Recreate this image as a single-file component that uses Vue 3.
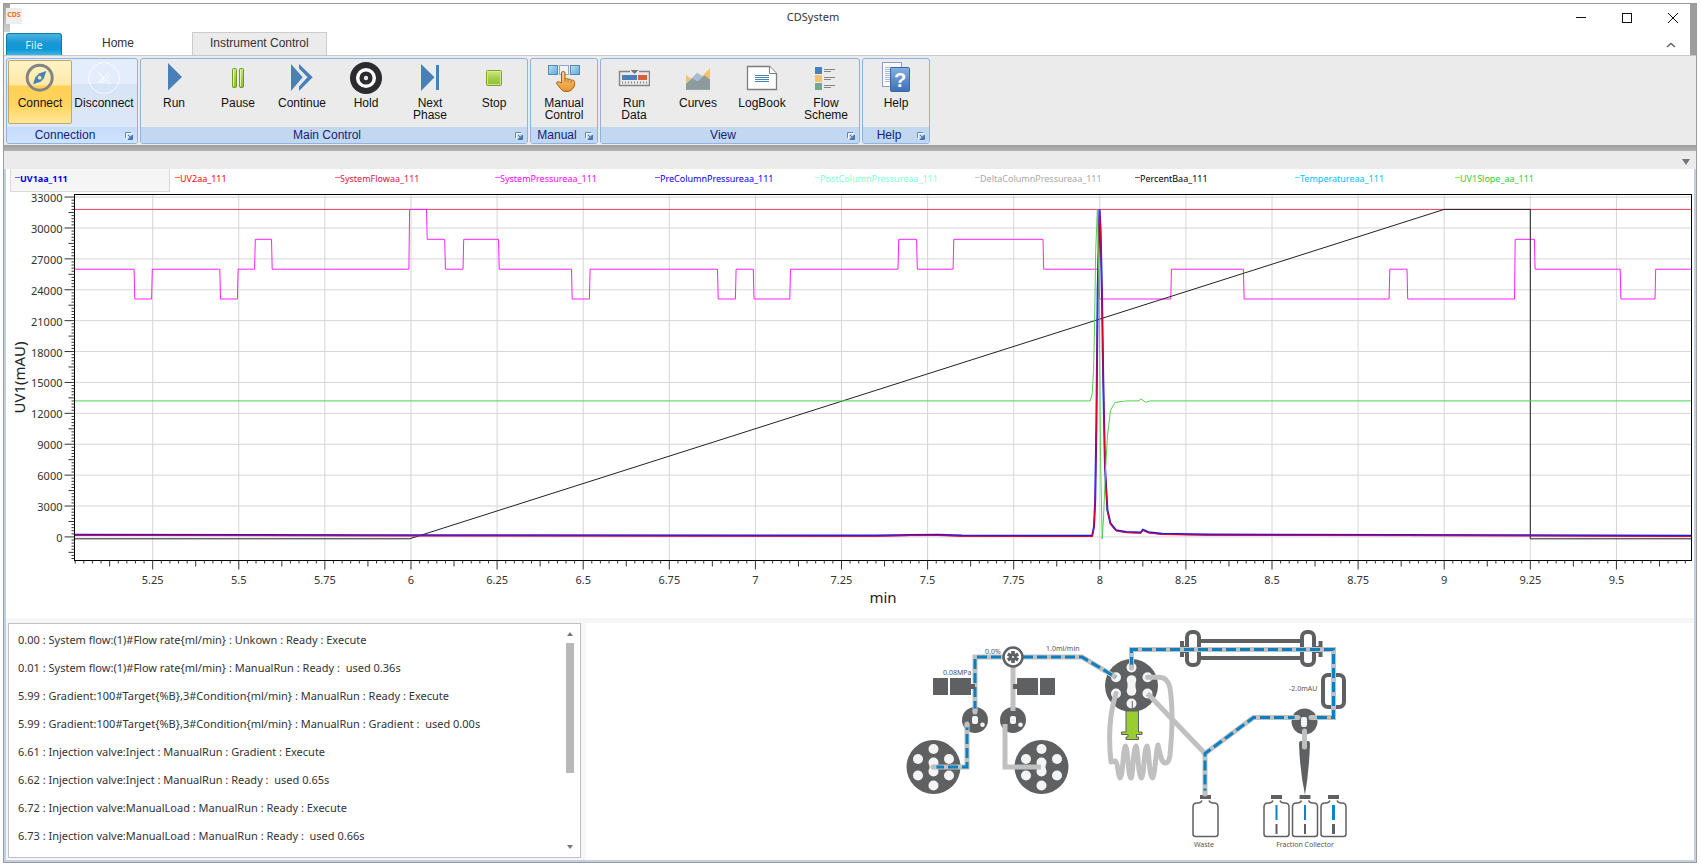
<template>
  <div class="window">
    <header class="header">
      <div class="title-bar">
        <span class="app-icon">CDS</span>
        <h1 class="title">CDSystem</h1>
        <button class="window-button" aria-label="Minimize">
          <svg width="10" height="10"><path d="M0 4.5H10" /></svg>
        </button>
        <button class="window-button" aria-label="Maximize">
          <svg width="10" height="10"><rect x="0.5" y="0.5" width="9" height="9" /></svg>
        </button>
        <button class="window-button" aria-label="Close">
          <svg width="10" height="10"><path d="M0 0L10 10M10 0L0 10" /></svg>
        </button>
      </div>
      <nav class="tabs">
        <button class="tab-file">File</button>
        <button class="tab tab-home">Home</button>
        <button class="tab tab-active">Instrument Control</button>
        <button class="collapse" aria-label="Collapse ribbon">
          <svg width="10" height="6"><path d="M1 5L5 1.5L9 5" /></svg>
        </button>
      </nav>
    </header>

    <div class="ribbon">
      <section
        v-for="group in groups"
        :key="group.name"
        class="group"
        :class="{ hovered: group.name == 'Connection' }"
      >
        <div class="group-buttons">
          <button
            v-for="item in group.items"
            :key="item.label"
            class="tool"
            :class="{ active: item.label == activeTool }"
            @click="activeTool = item.label"
          >
            <svg width="32" height="32" viewBox="0 0 32 32" v-html="icons[item.icon]"></svg>
            <span class="tool-label">{{ item.label }}</span>
          </button>
        </div>
        <div class="group-footer">
          <span class="group-name">{{ group.name }}</span>
          <button class="launcher" :aria-label="group.name + ' options'">
            <svg width="8" height="8" viewBox="0 0 8 8">
              <path d="M0.5 6V0.5H6" fill="none" stroke="#5f86bd" />
              <path d="M1.5 7V1.5H7" fill="none" stroke="#fff" />
              <path d="M3 3L5 5M7.5 3V7.5H3Z" fill="#4a74ad" stroke="#4a74ad" />
            </svg>
          </button>
        </div>
      </section>
    </div>
    <div class="ribbon-shadow"></div>
    <div class="strip">
      <button class="strip-menu" aria-label="Curve list">
        <svg width="8" height="6"><path d="M0 0H8L4 6Z" fill="#757575" /></svg>
      </button>
    </div>

    <main class="body">
      <div class="legend">
        <button
          v-for="curve in curves"
          :key="curve.name"
          class="legend-item"
          :class="{ selected: curve.name == selectedCurve }"
          :style="{ color: curve.color }"
          @click="selectedCurve = curve.name"
        >
          <i class="dash"></i>{{ curve.name }}
        </button>
      </div>

      <div ref="chartBox" class="chart">
        <svg :width="size.width" :height="size.height">
          <g class="grid">
            <line v-for="t in xMajor" :key="'gx' + t" :x1="px(t)" :x2="px(t)" :y1="plot.top" :y2="plot.bottom" />
            <line v-for="t in yMajor" :key="'gy' + t" :x1="plot.left" :x2="plot.right" :y1="py(t)" :y2="py(t)" />
          </g>
          <g class="series">
            <path v-for="s in series" :key="s.name" :d="toPath(s.points)" :stroke="s.color" :stroke-width="s.width" />
          </g>
          <rect
            class="frame"
            :x="plot.left"
            :y="plot.top"
            :width="plot.right - plot.left"
            :height="plot.bottom - plot.top"
          />
          <g class="ticks">
            <line
              v-for="t in xTicks"
              :key="'tx' + t.value"
              :x1="px(t.value)"
              :x2="px(t.value)"
              :y1="plot.bottom"
              :y2="plot.bottom + t.length"
            />
            <line
              v-for="t in yTicks"
              :key="'ty' + t.value"
              :x1="plot.left - t.length"
              :x2="plot.left"
              :y1="py(t.value)"
              :y2="py(t.value)"
            />
          </g>
          <g class="tick-labels">
            <text v-for="t in xMajor" :key="'lx' + t" :x="px(t)" :y="plot.bottom + 23" text-anchor="middle">{{ t }}</text>
            <text v-for="t in yMajor" :key="'ly' + t" :x="plot.left - 12" :y="py(t) + 5" text-anchor="end">{{ t }}</text>
          </g>
          <text class="axis-title" :x="(plot.left + plot.right) / 2" :y="size.height - 15" text-anchor="middle">min</text>
          <text
            class="axis-title"
            text-anchor="middle"
            :transform="`translate(19 ${(plot.top + plot.bottom) / 2}) rotate(-90)`"
          >UV1(mAU)</text>
        </svg>
      </div>

      <div class="bottom">
        <div class="log">
          <ul class="log-list">
            <li v-for="line in logLines" :key="line">{{ line }}</li>
          </ul>
          <div class="scrollbar">
            <svg width="6" height="4"><path d="M0 4L3 0L6 4Z" fill="#777" /></svg>
            <div class="track"><div class="thumb"></div></div>
            <svg width="6" height="4"><path d="M0 0L3 4L6 0Z" fill="#777" /></svg>
          </div>
        </div>

        <div class="scheme">
          <svg class="flow" width="480" height="237" viewBox="900 623 480 237">
            <!-- pumps -->
            <g v-for="pump in pumps" :key="pump.x" :transform="`translate(${pump.x} 767)`">
              <circle r="27" class="dark" />
              <circle v-for="h in pumpHoles" :key="h.join()" :cx="h[0]" :cy="h[1]" r="5" class="hole" />
              <circle cy="-4.5" r="5" class="hole" />
              <circle cy="4.5" r="5" class="hole" />
              <rect x="-4" y="-5" width="8" height="10" class="hole" />
            </g>
            <g v-for="x in [975, 1013]" :key="x" :transform="`translate(${x} 720)`">
              <circle r="13" class="dark" />
              <rect x="-3" y="-4" width="6" height="8" rx="2" class="hole" />
              <circle cx="7.5" cy="4.7" r="2.3" class="hole" />
            </g>
            <path class="dark" d="M933 678h15v17h-15zM950 678h21v17h-21zM1017 678h21v17h-21zM1040 678h15v17h-15z" />

            <!-- injection valve -->
            <circle cx="1131.5" cy="685.5" r="26.5" class="dark" />
            <circle v-for="h in valveHoles" :key="h.join()" :cx="h[0]" :cy="h[1]" r="5" class="hole" />
            <circle cx="1131.5" cy="680" r="4.8" class="hole" />
            <circle cx="1131.5" cy="691" r="4.8" class="hole" />
            <rect x="1127.5" y="680" width="8" height="11" class="hole" />

            <!-- column -->
            <path
              class="dark"
              d="M1180 641h4v5h3v7h-3v4h-4zM1322.5 641h-4v5h-3v7h3v4h4zM1200 639h101v4h-101zM1200 656h101v4h-101z"
            />
            <rect x="1187" y="632" width="12" height="33" rx="5" class="ring" />
            <rect x="1302" y="632" width="12" height="33" rx="5" class="ring" />

            <!-- detector and outlet valve -->
            <rect x="1323" y="675" width="21" height="32" rx="5" class="ring" />
            <circle cx="1304.5" cy="721.5" r="13" class="dark" />
            <rect x="1301" y="717" width="6" height="10" rx="2" class="hole" />
            <path class="dark" d="M1299 744q0-3 2-3h7q2 0 2 3q-1 28-5 51q-5-23-6-51z" />

            <!-- idle tubing -->
            <path class="pipe" d="M1013 667V711M1005 724V767H1041" />
            <path class="pipe" d="M1147.5 693.5L1205 753.5" />
            <path class="pipe" d="M1304.5 731V747" stroke-linecap="round" />
            <path
              class="coil"
              d="M1147.5 677.3H1160Q1168 678 1170 688Q1174 715 1170 755Q1169 763 1165 763C1161 762 1161 757 1158 745
                C1156 748 1155 777 1152.5 778C1149 777 1149 747 1147 746C1144 747 1144 777 1141.5 778C1138 777 1138 747 1136.3 746
                C1133 747 1133 777 1131 778C1128 777 1128 747 1125.5 746C1123 747 1123 777 1120 778C1118 777 1118 762 1115.5 761
                L1111 762C1108 735 1110 712 1116 693.5"
            />

            <!-- active tubing, blue medium over the tube wall -->
            <path v-for="d in activePipes" :key="'p' + d" class="pipe" :d="d" />
            <path v-for="d in activePipes" :key="'m' + d" class="medium" :d="d" />
            <path class="dark" d="M971 684h4v5h-4zM1013 684h4v5h-4z" />
            <path
              class="pipe"
              stroke-linecap="round"
              d="M975 711V712M933 767H934M967 724V725M1131.5 667V668M1297 717.5H1298M1311 717.5H1312"
            />

            <!-- mixer -->
            <circle cx="1013" cy="657" r="9.5" fill="#fff" stroke="#5f6062" stroke-width="2.5" />
            <path
              d="M1013 651V663M1007.8 654L1018.2 660M1007.8 660L1018.2 654"
              stroke="#5f6062"
              stroke-width="3.6"
            />
            <circle cx="1013" cy="657" r="1" fill="#fff" />

            <!-- syringe -->
            <path
              d="M1132.3 701V711H1126V732H1121.5V734.5H1128V737H1126V739.5H1138.5V737H1136.5V734.5H1142V732H1138.5V711H1132.3"
              fill="#9acd32"
              stroke="#5f6062"
            />

            <!-- bottles -->
            <g v-for="b in bottles" :key="b.x" :transform="`translate(${b.x} 795)`">
              <rect x="-5" width="11" height="4" class="dark" />
              <path
                d="M-3 5.5Q-4 8 -7 8H-8Q-12 8 -12 12V39Q-12 41.5 -9.5 41.5H10.5Q13 41.5 13 39V12Q13 8 9 8H8Q5 8 4 5.5"
                class="glass"
              />
              <template v-if="b.marked">
                <rect :x="-b.marked / 2 + 0.5" y="10" :width="b.marked" height="15" fill="#0a85c7" />
                <rect :x="-b.marked / 2 + 0.5" y="29" :width="b.marked" height="10" class="dark" />
              </template>
            </g>
            <path class="pipe" stroke-linecap="round" d="M1205 793V794" />

            <text x="985" y="654">0.0%</text>
            <text x="943" y="675">0.08MPa</text>
            <text x="1046" y="651">1.0ml/min</text>
            <text x="1289" y="691">-2.0mAU</text>
            <text x="1204" y="847" text-anchor="middle">Waste</text>
            <text x="1305" y="847" text-anchor="middle">Fraction Collector</text>
          </svg>
        </div>
      </div>
    </main>
  </div>
</template>

<script setup>
import { computed, onBeforeUnmount, onMounted, reactive, ref } from 'vue';

const activeTool = ref('Connect');
const selectedCurve = ref('UV1aa_111');

const groups = [
  {
    name: 'Connection',
    items: [
      { label: 'Connect', icon: 'connect' },
      { label: 'Disconnect', icon: 'disconnect' }
    ]
  },
  {
    name: 'Main Control',
    items: [
      { label: 'Run', icon: 'run' },
      { label: 'Pause', icon: 'pause' },
      { label: 'Continue', icon: 'resume' },
      { label: 'Hold', icon: 'hold' },
      { label: 'Next Phase', icon: 'next' },
      { label: 'Stop', icon: 'stop' }
    ]
  },
  { name: 'Manual', items: [{ label: 'Manual Control', icon: 'manual' }] },
  {
    name: 'View',
    items: [
      { label: 'Run Data', icon: 'runData' },
      { label: 'Curves', icon: 'curves' },
      { label: 'LogBook', icon: 'logBook' },
      { label: 'Flow Scheme', icon: 'flow' }
    ]
  },
  { name: 'Help', items: [{ label: 'Help', icon: 'help' }] }
];

const green = (id) =>
  `<linearGradient id="${id}" x1="0" y1="0" x2="0" y2="1"><stop offset="0" stop-color="#cde78c"/><stop offset=".5" stop-color="#a5cf4c"/><stop offset="1" stop-color="#8fbf30"/></linearGradient>`;
const blue = (id) =>
  `<linearGradient id="${id}" x1="0" y1="0" x2="1" y2="1"><stop offset="0" stop-color="#b9e2f7"/><stop offset="1" stop-color="#5aa9dc"/></linearGradient>`;

const icons = {
  connect:
    '<circle cx="15.7" cy="15.7" r="12.5" fill="none" stroke="#848484" stroke-width="3"/><path d="M9 22.3L11.8 14L17.5 19.5Z M22.3 9L19.6 17.3L14 11.8Z" fill="#4a80ba"/><circle cx="15.7" cy="15.7" r="2.6" fill="#ffe6a0" stroke="#4a80ba" stroke-width="1.5"/>',
  disconnect:
    '<circle cx="16" cy="16" r="15.400" fill="none" stroke="#fff" opacity=".8"/><path d="M9.500 9.500L13.500 13.500M12 20.500L16 16.500L12 12.500M20.500 11L11 20M22 13L14 21M18.500 18L22.500 22" fill="none" stroke="#fff" opacity=".85"/>',
  run: '<path d="M10 1L24 15L10 28.5Z" fill="#4a80ba"/>',
  pause:
    green('gp') +
    '<g fill="url(#gp)" stroke="#6f9a1f"><rect x="10.5" y="6.5" width="4" height="19" rx="1"/><rect x="17.5" y="6.5" width="4" height="19" rx="1"/></g><path d="M11.5 8V24M18.5 8V24" stroke="#e3f3b5"/>',
  resume: '<path d="M5 2L16.7 15.3L5 29Z M13 2L26.7 15.3L13 29V24.5L21.5 15.3L13 6.5Z" fill="#4a80ba"/>',
  hold:
    '<circle cx="16" cy="16" r="16" fill="#2b2b30"/><circle cx="16" cy="16" r="8.3" fill="none" stroke="#fff" stroke-width="3.5"/><circle cx="16" cy="16" r="2.2" fill="#eaeaea"/>',
  next: '<path d="M7 2L20.5 15.3L7 29Z M22 3H25V28H22Z" fill="#4a80ba"/>',
  stop:
    green('gs') +
    '<rect x="8.5" y="8.5" width="15" height="15" rx="1" fill="url(#gs)" stroke="#7ba428"/><rect x="9.5" y="9.5" width="13" height="13" fill="none" stroke="#d8eca0" opacity=".8"/>',
  manual:
    blue('bm') +
    '<linearGradient id="hm" x1="0" y1="0" x2="0" y2="1"><stop offset="0" stop-color="#ffd28a"/><stop offset="1" stop-color="#e8932c"/></linearGradient>' +
    '<g fill="url(#bm)" stroke="#5b87b5"><rect x=".5" y="3.5" width="9" height="9"/><rect x="22.5" y="3.5" width="9" height="9"/></g><rect x="11.5" y="3.5" width="9" height="9" fill="#eef2fb" stroke="#93a6cb"/>' +
    '<path d="M13.5 21V11Q13.5 9.5 15.2 9.5Q17 9.5 17 11V17Q18.5 15.5 20 17.3Q22 16.3 23 18.3Q26.5 17.3 26.7 20.5Q27 25 24 27.5Q21 30 18 29.500Q14 29.500 12.500 26.500L8.5 21.5Q8.5 19.5 10.5 19.7Z" fill="url(#hm)" stroke="#a35f14"/><path d="M17 17V20M20 17.5V20.5M23 18.5V21" stroke="#a35f14" stroke-width=".8"/>',
  runData:
    '<path d="M12 9.5H1.5V23.5H31.5V9.5H21" fill="none" stroke="#858585" stroke-width="1.4"/><path d="M12.5 8H20.5L16.5 12Z" fill="#777"/><rect x="4" y="13" width="15" height="5" fill="#4a80ba"/><rect x="20" y="13" width="9" height="5" fill="#d95f3b"/><path d="M4 20.5H30" stroke="#858585" stroke-width="2" stroke-dasharray="1 2"/>',
  curves:
    '<path d="M4 13L10.7 18L19 15L28 6.3V27.7H4Z" fill="#efc36f"/><path d="M4 22L15 10.7L20 14L28 22V27.7H4Z" fill="#a8bcd4"/><path d="M4 22L10.5 16.5L15.5 19.5L22.5 13.5L28 17.5V27.7H4Z" fill="#8c9b9b"/>',
  logBook:
    '<path d="M1.5 4.5H23.5L30.5 11.5V27.5H1.5Z" fill="#fff" stroke="#7d7d7d" stroke-width="1.3"/><path d="M23.5 4.5V11.5H30.5" fill="#fff" stroke="#7d7d7d"/><path d="M9 13.5H23M9 15.5H23M9 17.5H23M9 19.5H23" stroke="#4a80ba"/>',
  flow:
    '<path d="M5 5H12V12H5Z" fill="#4a80ba"/><path d="M5 13H12V20H5Z" fill="#efc36f"/><path d="M5 21H12V28H5Z" fill="#73a792"/><path d="M14 7.5H25M14 9.5H21M14 15.5H25M14 17.5H21M14 23.5H25M14 25.5H21" stroke="#858585"/>',
  help:
    '<linearGradient id="gh" x1="0" y1="0" x2="0" y2="1"><stop offset="0" stop-color="#82b0e0"/><stop offset="1" stop-color="#3c6fb5"/></linearGradient><rect x="2.5" y=".5" width="19" height="24" fill="#f7f9fd" stroke="#8aa0cb"/><path d="M5 5.5H18M5 7.5H18M5 9.5H10M5 11.5H10M5 13.5H10M5 15.5H10M5 17.5H10M5 19.5H10" stroke="#a9b9d9"/><rect x="10.5" y="5.5" width="19" height="24" rx="1" fill="url(#gh)" stroke="#3a66a8"/><text x="20" y="25" text-anchor="middle" font-family="Liberation Sans, sans-serif" font-weight="bold" font-size="20" fill="#fff">?</text>'
};

const curves = [
  { name: 'UV1aa_111', color: '#0000e6' },
  { name: 'UV2aa_111', color: '#f00' },
  { name: 'SystemFlowaa_111', color: '#dc143c' },
  { name: 'SystemPressureaa_111', color: '#f0f' },
  { name: 'PreColumnPressureaa_111', color: '#00f' },
  { name: 'PostColumnPressureaa_111', color: '#7fffd4' },
  { name: 'DeltaColumnPressureaa_111', color: '#a9a9a9' },
  { name: 'PercentBaa_111', color: '#000' },
  { name: 'Temperatureaa_111', color: '#00bfff' },
  { name: 'UV1Slope_aa_111', color: '#32cd32' }
];

// chart geometry follows the size of its box
const chartBox = ref(null);
const size = reactive({ width: 1688, height: 424 });
const domain = { x0: 5.023, x1: 9.718, y0: -2290, y1: 33250 };

let observer;
onMounted(() => {
  observer = new ResizeObserver(([entry]) => {
    size.width = Math.round(entry.contentRect.width);
    size.height = Math.round(entry.contentRect.height);
  });
  observer.observe(chartBox.value);
});
onBeforeUnmount(() => observer.disconnect());

const plot = computed(() => ({
  left: 68.5,
  top: 0.5,
  right: size.width - 2.5,
  bottom: size.height - 57.5
}));

const px = (v) => {
  const { left, right } = plot.value;
  return left + ((v - domain.x0) / (domain.x1 - domain.x0)) * (right - left);
};
const py = (v) => {
  const { top, bottom } = plot.value;
  return bottom - ((v - domain.y0) / (domain.y1 - domain.y0)) * (bottom - top);
};
const toPath = (points) => 'M' + points.map(([x, y]) => `${px(x).toFixed(1)} ${py(y).toFixed(1)}`).join('L');

const xMajor = Array.from({ length: 18 }, (_, i) => 5.25 + i * 0.25);
const yMajor = Array.from({ length: 12 }, (_, i) => i * 3000);

const tickLength = (i, major) => (i % 10 == 0 ? major : i % 5 == 0 ? 6 : 3);
const xTicks = [];
for (let i = 201; i <= 388; i++) {
  xTicks.push({ value: i * 0.025, length: tickLength(i, 9) });
}
const yTicks = [];
for (let i = -7; i <= 110; i++) {
  yTicks.push({ value: i * 300, length: tickLength(i, 10) });
}

// [start, level] of every step of the system pressure
const pressureSteps = [
  [5.023, 26000], [5.196, 23100], [5.247, 26000], [5.445, 23100], [5.496, 26000], [5.546, 28900],
  [5.595, 26000], [5.994, 31800], [6.045, 28900], [6.098, 26000], [6.151, 28900], [6.254, 26000],
  [6.466, 23100], [6.518, 26000], [6.89, 23100], [6.942, 26000], [6.994, 23100], [7.1, 26000],
  [7.414, 28900], [7.468, 26000], [7.574, 28900], [7.835, 26000], [7.997, 23100], [8.206, 26000],
  [8.417, 23100], [8.84, 26000], [8.892, 23100], [9.204, 28900], [9.262, 26000], [9.511, 23100],
  [9.612, 26000], [9.718, 26000]
];
const pressure = pressureSteps.flatMap(([x, y], i) => (i ? [[x, pressureSteps[i - 1][1]], [x + 0.002, y]] : [[x, y]]));
pressure.pop();

const uv = [
  [5.023, 220], [6, 170], [7.35, 130], [7.45, 200], [7.53, 210], [7.6, 130], [7.978, 110], [7.983, 1000],
  [7.9865, 3570], [7.99, 11000], [7.994, 24000], [7.999, 31800], [8.002, 30000], [8.006, 24000],
  [8.01, 15500], [8.015, 6800], [8.022, 2600], [8.031, 1300], [8.047, 650], [8.077, 480], [8.119, 430],
  [8.125, 700], [8.141, 460], [8.181, 300], [8.316, 230], [9.24, 170], [9.718, 110]
];

const series = [
  { name: 'flow', color: '#e0405f', width: 1, points: [[5.023, 31800], [9.718, 31800]] },
  { name: 'pressure', color: '#ff1fff', width: 1, points: pressure },
  {
    name: 'percentB',
    color: '#222',
    width: 1,
    points: [[5.023, -180], [5.996, -180], [9, 31800], [9.25, 31800], [9.25, -180], [9.718, -180]]
  },
  { name: 'uv1', color: '#1a1af0', width: 2, points: uv },
  { name: 'uv2', color: '#f00020', width: 1, points: uv.map(([x, y]) => [x, y - 70]) },
  {
    name: 'slope',
    color: '#4fd04f',
    width: 1,
    points: [
      [5.023, 13210], [7.972, 13210], [7.978, 13900], [7.982, 16200], [7.985, 20700], [7.988, 27800],
      [7.993, 31800], [7.996, 27200], [7.999, 20700], [8.002, 7800], [8.007, -190], [8.011, 1950],
      [8.016, 6150], [8.022, 9700], [8.031, 12300], [8.044, 13050], [8.077, 13210], [8.114, 13210],
      [8.119, 13400], [8.133, 13080], [8.147, 13210], [9.718, 13210]
    ]
  }
];

const logLines = [
  '0.00 : System flow:(1)#Flow rate{ml/min} : Unkown : Ready : Execute',
  '0.01 : System flow:(1)#Flow rate{ml/min} : ManualRun : Ready :  used 0.36s',
  '5.99 : Gradient:100#Target{%B},3#Condition{ml/min} : ManualRun : Ready : Execute',
  '5.99 : Gradient:100#Target{%B},3#Condition{ml/min} : ManualRun : Gradient :  used 0.00s',
  '6.61 : Injection valve:Inject : ManualRun : Gradient : Execute',
  '6.62 : Injection valve:Inject : ManualRun : Ready :  used 0.65s',
  '6.72 : Injection valve:ManualLoad : ManualRun : Ready : Execute',
  '6.73 : Injection valve:ManualLoad : ManualRun : Ready :  used 0.66s'
];

const pumps = [{ x: 933.5 }, { x: 1041.5 }];
const pumpHoles = [[0, -18], [15.5, -8], [15.5, 8.5], [0, 18.5], [-15.5, 8.5], [-15.5, -8]];
const valveHoles = [[1131.5, 667.5], [1116, 677.3], [1116, 693.5], [1131.5, 703.5], [1147.5, 693.5], [1147.5, 677.3]];
const activePipes = [
  'M934 767H967V724',
  'M975 711V657H1003',
  'M1023 657H1082L1116 677.3',
  'M1131.5 667V649.5H1333.5V717.5H1311',
  'M1298 717.5H1253.5L1205 753.5V793'
];
const bottles = [{ x: 1205 }, { x: 1276, marked: 2 }, { x: 1304.5, marked: 2 }, { x: 1333, marked: 3 }];
</script>

<style>
body {
  margin: 0;
  background: #fff;
}
</style>

<style scoped>
.window {
  box-sizing: border-box;
  height: calc(100vh - 6px);
  margin: 3px 4px 3px 3px;
  border: 1px solid #9b9b9b;
  display: flex;
  flex-direction: column;
  font-family: 'Noto Sans', 'Open Sans', sans-serif;
  color: #333;
  background: #fff;
}
button {
  margin: 0;
  padding: 0;
  border: 0;
  background: none;
  font-family: inherit;
  color: inherit;
}

.header {
  background: linear-gradient(to left, #9e9e9e 6px, transparent 6px);
}
.title-bar {
  display: flex;
  height: 28px;
  background: linear-gradient(to bottom, #a0a0a0, #d0d0d0) no-repeat 0 0 / 6px 100%;
}
.app-icon {
  width: 16px;
  height: 16px;
  margin: 4px 0 0 2px;
  background: #eee;
  color: #ff6a2a;
  font-size: 7px;
  font-weight: 700;
  line-height: 14px;
  text-align: center;
}
.title {
  flex: 1;
  margin: 0 0 0 46px;
  font-size: 11px;
  font-weight: 400;
  line-height: 26px;
  text-align: center;
}
.window-button {
  width: 46px;
}
.window-button svg {
  fill: none;
  stroke: #111;
}
.tabs {
  display: flex;
  height: 23px;
  font-family: 'Liberation Sans', Arial, sans-serif;
}
.tab-file {
  width: 56px;
  margin: 1px 3px 0 2px;
  border: 1px solid #0b7bab;
  border-bottom: 0;
  border-radius: 3px 3px 0 0;
  background: linear-gradient(to bottom, #4cb4e2, #1797d4 45%, #109ad8 75%, #3fb6e4);
  color: #d8f1fc;
  font-size: 11px;
  font-family: 'Noto Sans', sans-serif;
}
.tab {
  padding: 0 17px 2px;
  font-size: 12px;
}
.tab-home {
  width: 106px;
  margin-right: 21px;
}
.tab-active {
  border: 1px solid #ccc;
  border-bottom: 0;
  background: #ebebeb;
}
.collapse {
  width: 46px;
  margin-left: auto;
  padding-right: 4px;
}
.collapse svg {
  fill: none;
  stroke: #666;
  stroke-width: 1.5;
}

.ribbon {
  display: flex;
  gap: 2px;
  padding: 2px 2px 1px;
  border-top: 1px solid #c8c8c8;
  background: #ebebeb;
  font-family: 'Liberation Sans', Arial, sans-serif;
}
.group {
  border: 1px solid #8db2e3;
  border-radius: 3px;
}
.group-buttons {
  display: flex;
  padding: 1px 1px 3px;
}
.group.hovered {
  background: linear-gradient(to bottom, #e3edfb 25px, #d6e4f6 25px, #dfeafa);
}
.tool {
  box-sizing: border-box;
  display: flex;
  flex-direction: column;
  align-items: center;
  width: 64px;
  height: 64px;
  padding-top: 1px;
  border: 1px solid transparent;
  border-radius: 2px;
  font-size: 12px;
  line-height: 12px;
  color: #111;
}
.tool.active {
  border-color: #c2a868;
  background: linear-gradient(to bottom, #fff3c6, #ffe9a8 24px, #ffd153 25px, #ffd560 45px, #ffe79b);
}
.tool-label {
  max-width: 50px;
  margin-top: 3px;
  display: flex;
  justify-content: center;
}
.group-footer {
  box-sizing: border-box;
  display: flex;
  align-items: center;
  height: 16px;
  padding: 1px 2px 0 0;
  border-radius: 0 0 2px 2px;
  background: #c1d8f0;
}
.hovered .group-footer {
  background: linear-gradient(to bottom, #c6dcfb, #cfe4ff);
}
.group-name {
  flex: 1;
  font-size: 12px;
  line-height: 15px;
  text-align: center;
  color: #15217c;
}
.launcher {
  display: flex;
  justify-content: flex-end;
  width: 12px;
  padding-right: 2px;
}
.ribbon-shadow {
  height: 6px;
  background: linear-gradient(to bottom, #9d9d9d, #b4b4b4);
}
.strip {
  display: flex;
  justify-content: flex-end;
  align-items: center;
  height: 18px;
  padding-right: 6px;
  background: #ebebeb;
}
.strip-menu {
  display: flex;
  padding-top: 4px;
}

.body {
  flex: 1;
  min-height: 0;
  display: flex;
  flex-direction: column;
  border: 2px solid #c3d0e4;
  border-top: 0;
}
.legend {
  display: flex;
  height: 23px;
  margin: 0 4px 2px;
}
.legend-item {
  box-sizing: border-box;
  display: flex;
  width: 160px;
  padding-left: 4px;
  border: 1px solid transparent;
  border-top: 0;
  font-size: 9px;
  line-height: 20px;
  white-space: nowrap;
}
.legend-item.selected {
  border-color: #d9d9d9;
  background: #f5f5f5;
  font-weight: 700;
}
.dash {
  width: 5px;
  height: 1px;
  margin-top: 8px;
  background: currentColor;
  opacity: 0.6;
}
.chart {
  flex: 1;
  min-height: 0;
  overflow: hidden;
}
.chart svg {
  display: block;
}
.grid line {
  stroke: #d6d6d6;
}
.series path {
  fill: none;
}
.frame {
  fill: none;
  stroke: #000;
}
.ticks line {
  stroke: #333;
}
.tick-labels text {
  font-size: 11px;
  fill: #333;
}
.axis-title {
  font-size: 15px;
  fill: #222;
}

.bottom {
  display: flex;
  height: 237px;
  padding: 5px 0 0 2px;
  background: #f6f6f6;
}
.log {
  box-sizing: border-box;
  display: flex;
  width: 34%;
  height: 235px;
  border: 1px solid #c4c0c4;
  background: #fff;
}
.log-list {
  flex: 1;
  margin: 0;
  padding: 2px 0 0 9px;
  list-style: none;
  font-size: 11px;
  line-height: 28px;
  white-space: pre;
}
.scrollbar {
  display: flex;
  flex-direction: column;
  align-items: center;
  gap: 7px;
  width: 20px;
  padding: 8px 0;
}
.track {
  flex: 1;
}
.thumb {
  width: 8px;
  height: 130px;
  background: #b8b8b8;
}
.scheme {
  flex: 1;
  display: flex;
  justify-content: center;
  margin-left: 5px;
  background: #fff;
}
.flow text {
  font-size: 7px;
  fill: #555;
}
.dark {
  fill: #5f6062;
}
.hole {
  fill: #f4f4f4;
}
.ring {
  fill: none;
  stroke: #5f6062;
  stroke-width: 4;
}
.pipe {
  fill: none;
  stroke: #c0c0c0;
  stroke-width: 5;
}
.medium {
  fill: none;
  stroke: #0a80c0;
  stroke-width: 3;
  stroke-dasharray: 10 4;
}
.coil {
  fill: none;
  stroke: #c0c0c0;
  stroke-width: 5;
  stroke-linecap: round;
  stroke-linejoin: round;
}
.glass {
  fill: none;
  stroke: #5f6062;
  stroke-width: 1.5;
}
</style>
